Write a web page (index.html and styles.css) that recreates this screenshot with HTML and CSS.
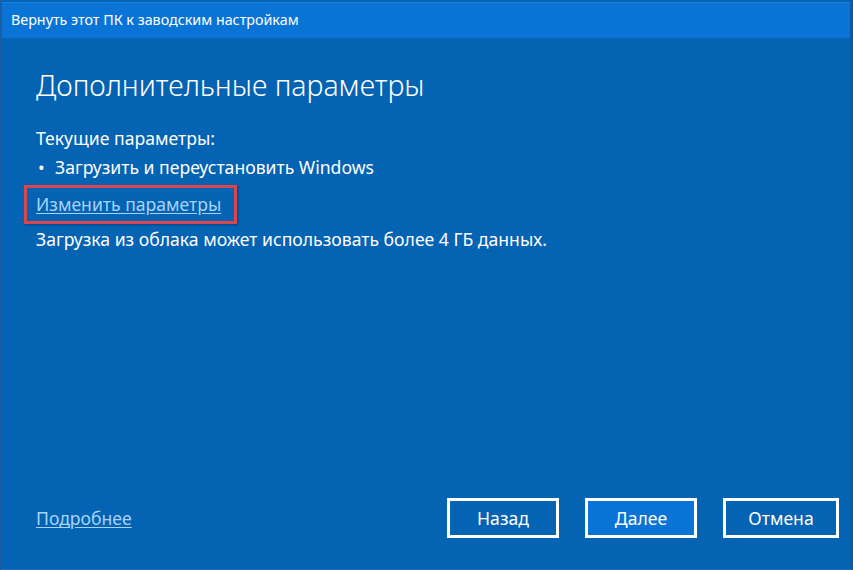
FILE: index.html
```html
<!DOCTYPE html>
<html lang="ru">
<head>
<meta charset="utf-8">
<link rel="stylesheet" href="styles.css">
</head>
<body>
<div class="window">
  <div class="titlebar">Вернуть этот ПК к заводским настройкам</div>
  <div class="content">
    <h1 class="heading">Дополнительные параметры</h1>
    <p class="line current">Текущие параметры:</p>
    <p class="line bullet"><span class="dot">•</span>Загрузить и переустановить Windows</p>
    <div class="highlight"><a class="link" href="#">Изменить параметры</a></div>
    <p class="line">Загрузка из облака может использовать более 4 ГБ данных.</p>
  </div>
  <div class="footer">
    <a class="link" href="#">Подробнее</a>
    <div class="buttons">
      <button class="btn">Назад</button>
      <button class="btn primary">Далее</button>
      <button class="btn wide">Отмена</button>
    </div>
  </div>
</div>
</body>
</html>
```
FILE: styles.css
```css
html, body {
  margin: 0;
  padding: 0;
  background: #0563b4;
}
.window {
  width: 853px;
  height: 570px;
  box-sizing: border-box;
  display: flex;
  flex-direction: column;
  background: #0563b4;
  border-left: 2px solid #1b5da0;
  border-right: 3px solid #0a5aa8;
  border-bottom: 1px solid #1a70c4;
  font-family: "Noto Sans", "Open Sans", sans-serif;
  color: #ffffff;
}
.titlebar {
  height: 36px;
  margin-top: 2px;
  background: #0a74d6;
  border-top: 1px solid #1b7fe0;
  box-sizing: border-box;
  padding-left: 9px;
  font-size: 14.3px;
  line-height: 34px;
}
.content {
  flex: 1;
  padding: 0 0 0 34px;
}
.heading {
  margin: 27px 0 0 0;
  font-size: 28.5px;
  font-weight: 300;
  line-height: 40px;
  letter-spacing: 0;
}
.line {
  margin: 0;
  font-size: 17.6px;
  line-height: 31px;
}
.current {
  margin-top: 18px;
}
.bullet {
  margin-top: -2px;
}
.dot {
  display: inline-block;
  width: 19px;
  padding-left: 2px;
  box-sizing: border-box;
}
.highlight {
  display: inline-block;
  margin: 2px 0 0 -12px;
  padding: 2px 13px 2px 9px;
  border: 3px solid #d9464d;
  box-shadow: 1px 1px 2px rgba(0, 30, 70, 0.45);
}
.link {
  color: #a6d4f7;
  text-decoration: underline;
  text-underline-offset: 2px;
  font-size: 17.6px;
  line-height: 29px;
}
.footer {
  height: 80px;
  display: flex;
  align-items: flex-start;
  justify-content: space-between;
  padding: 9px 11px 0 34px;
  box-sizing: border-box;
}
.footer > .link {
  margin-top: 6px;
}
.buttons {
  display: flex;
  gap: 26px;
}
.btn {
  width: 112px;
  height: 40px;
  background: #0563b4;
  border: 3px solid #ffffff;
  color: #ffffff;
  font-family: "Noto Sans", "Open Sans", sans-serif;
  font-size: 17.6px;
  padding: 0;
}
.btn.wide {
  width: 116px;
}
.btn.primary {
  background: #0a74d6;
}
```
